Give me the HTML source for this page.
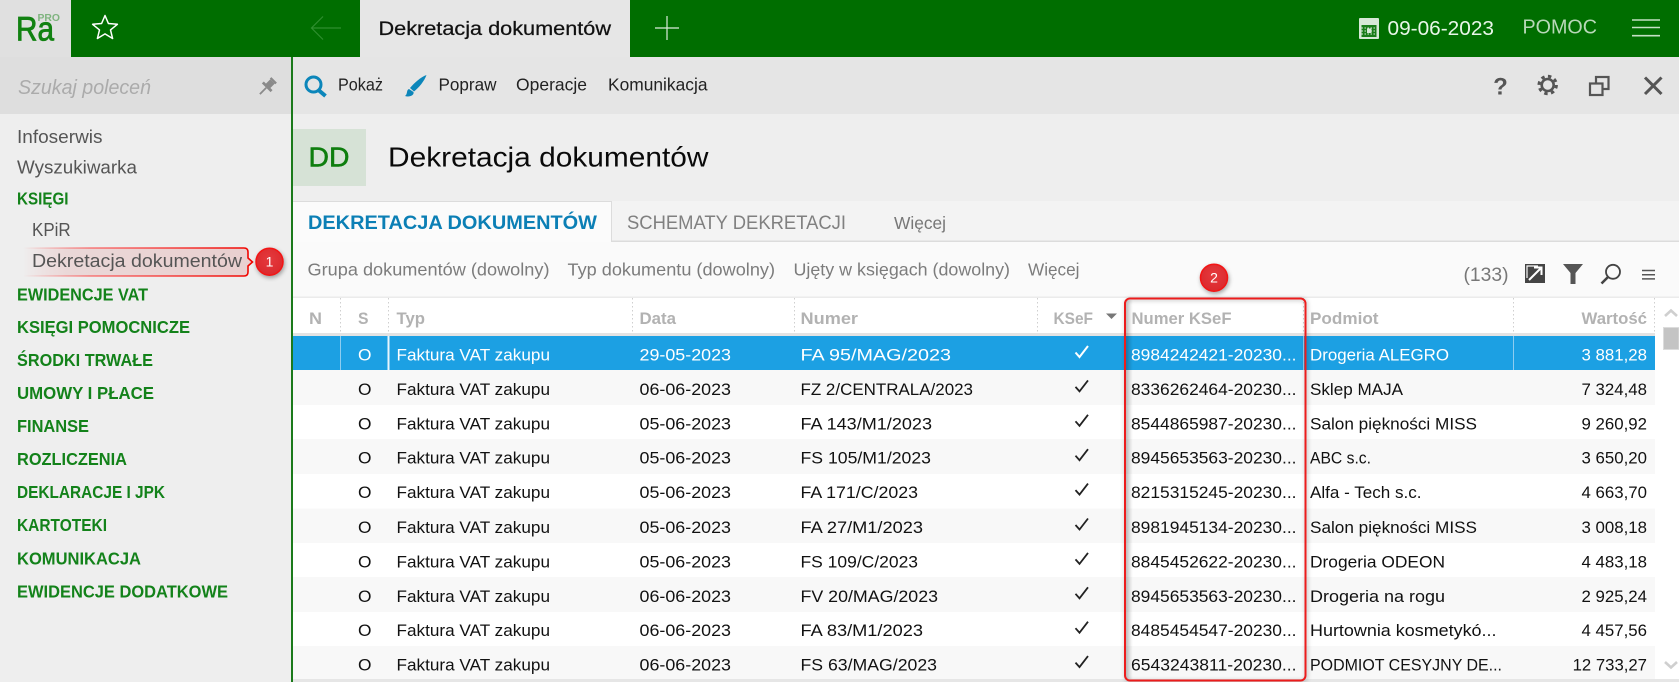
<!DOCTYPE html>
<html lang="pl">
<head>
<meta charset="utf-8">
<title>Dekretacja dokumentów</title>
<style>
html,body{margin:0;padding:0;width:1679px;height:682px;overflow:hidden;background:#fff}
svg{display:block}
text{font-family:"Liberation Sans",Arial,sans-serif;white-space:pre}
.nav{font-size:18.5px;fill:#555}
.sec{font-size:17.5px;font-weight:bold;fill:#13821a}
.tb{font-size:17.5px;fill:#222}
.flt{font-size:17.5px;fill:#7c7c7c}
.hd{font-size:17px;font-weight:bold;fill:#b2b2b2}
.r{font-size:17px;fill:#111}
.s{font-size:17px;fill:#fff}
</style>
</head>
<body>
<svg width="1679" height="682" viewBox="0 0 1679 682" xmlns="http://www.w3.org/2000/svg">
<defs>
<linearGradient id="hl" x1="23" x2="248" y1="0" y2="0" gradientUnits="userSpaceOnUse">
<stop offset="0" stop-color="#e66" stop-opacity="0"/><stop offset=".2" stop-color="#d88" stop-opacity=".22"/><stop offset="1" stop-color="#d88" stop-opacity=".3"/>
</linearGradient>
<linearGradient id="hls" x1="23" x2="248" y1="0" y2="0" gradientUnits="userSpaceOnUse">
<stop offset="0" stop-color="#f33" stop-opacity="0"/><stop offset=".3" stop-color="#f22" stop-opacity=".55"/><stop offset="1" stop-color="#f00500"/>
</linearGradient>
<linearGradient id="shl" x1="0" x2="1" y1="0" y2="0">
<stop offset="0" stop-color="#000" stop-opacity=".16"/><stop offset="1" stop-color="#000" stop-opacity="0"/>
</linearGradient>
<radialGradient id="bd" cx=".5" cy=".4" r=".7">
<stop offset="0" stop-color="#e53a3e"/><stop offset="1" stop-color="#d9262a"/>
</radialGradient>
</defs>

<!-- base areas -->
<rect x="0" y="0" width="1679" height="682" fill="#fff"/>
<rect x="0" y="0" width="71" height="57" fill="#e0e0e0"/>
<rect x="71" y="0" width="289" height="57" fill="#006e00"/>
<rect x="360" y="0" width="270" height="57" fill="#e6e6e6"/>
<rect x="630" y="0" width="1049" height="57" fill="#006e00"/>

<rect x="0" y="57" width="291" height="625" fill="#eeeeee"/>
<rect x="0" y="57" width="291" height="57" fill="#dedede"/>
<rect x="291" y="57" width="2" height="625" fill="#1b7a1b"/>
<rect x="293" y="57" width="1386" height="57" fill="#e5e5e5"/>
<rect x="293" y="114" width="1386" height="87" fill="#eeeeee"/>
<rect x="293" y="129" width="73" height="57" fill="#d6e2d6"/>
<rect x="293" y="201" width="1386" height="40" fill="#f3f3f3"/>
<rect x="293" y="201" width="318" height="41" fill="#fbfbfb"/>
<rect x="293" y="201" width="319" height="1" fill="#dcdcdc"/>
<rect x="611" y="201" width="1" height="40" fill="#dcdcdc"/>
<rect x="611" y="240.500" width="1068" height="1.500" fill="#dcdcdc"/>
<rect x="293" y="242" width="1386" height="55" fill="#fafafa"/>
<rect x="293" y="296.500" width="1386" height="1.500" fill="#ebebeb"/>
<rect x="293" y="333" width="1362" height="3" fill="#e3e3e3"/>

<!-- rows -->
<rect x="293" y="336" width="1362" height="34" fill="#1ca0e3"/>
<rect x="293" y="370" width="1362" height="35" fill="#f8f8f8"/>
<rect x="293" y="439" width="1362" height="35" fill="#f8f8f8"/>
<rect x="293" y="508.500" width="1362" height="34.500" fill="#f8f8f8"/>
<rect x="293" y="577" width="1362" height="35" fill="#f8f8f8"/>
<rect x="293" y="646" width="1362" height="33" fill="#f8f8f8"/>
<rect x="293" y="679" width="1386" height="3" fill="#e6e6e6"/>
<rect x="340" y="336" width="1" height="34" fill="#8ecdf0"/>
<rect x="387.500" y="336" width="2" height="34" fill="#e8f5fc"/>
<rect x="1303" y="336" width="1" height="34" fill="#8ecdf0"/>
<rect x="1513" y="336" width="1" height="34" fill="#8ecdf0"/>

<!-- header dotted separators -->
<g stroke="#cfcfcf" stroke-width="1" stroke-dasharray="1.500,2.500">
<line x1="340.500" y1="298" x2="340.500" y2="332"/>
<line x1="388.500" y1="298" x2="388.500" y2="332"/>
<line x1="632.500" y1="298" x2="632.500" y2="332"/>
<line x1="794.500" y1="298" x2="794.500" y2="332"/>
<line x1="1037.500" y1="298" x2="1037.500" y2="332"/>
<line x1="1303.500" y1="298" x2="1303.500" y2="332"/>
<line x1="1513.500" y1="298" x2="1513.500" y2="332"/>
<line x1="1654.500" y1="298" x2="1654.500" y2="332"/>
</g>

<!-- top bar -->
<text x="16" y="40.500" font-size="34" fill="#128212" stroke="#128212" stroke-width=".8" textLength="38" lengthAdjust="spacingAndGlyphs">Ra</text>
<text x="37.500" y="21" font-size="10.500" fill="#7fb47f" font-weight="bold" textLength="22.500" lengthAdjust="spacingAndGlyphs">PRO</text>
<polygon points="105,15.500 108.400,23.500 117.400,24.300 110.500,29.900 112.600,38.500 105,33.900 97.400,38.500 99.500,29.900 92.600,24.300 101.600,23.500" fill="none" stroke="#fff" stroke-width="1.500" stroke-linejoin="round"/>
<path d="M341 28H311.500M323 16.500L311.500 28L323 39.500" fill="none" stroke="#2f8f2f" stroke-width="1.200"/>
<text x="378.500" y="35" font-size="19" fill="#111" stroke="#111" stroke-width=".25" textLength="232.500" lengthAdjust="spacingAndGlyphs">Dekretacja dokumentów</text>
<path d="M655 28H679M667 16V40" stroke="#dcecdc" stroke-width="1.200" fill="none"/>
<rect x="1359" y="18" width="20" height="21" rx="1" fill="#d6e8d6"/>
<rect x="1361.500" y="25" width="15" height="12" fill="#187c18"/>
<g stroke="#d6e8d6" stroke-width="1" stroke-dasharray="1.500,1.500">
<line x1="1361.500" y1="28" x2="1376.500" y2="28"/><line x1="1361.500" y1="31" x2="1376.500" y2="31"/><line x1="1361.500" y1="34" x2="1376.500" y2="34"/>
</g>
<rect x="1367" y="28.500" width="4.500" height="4.500" fill="#d6e8d6"/>
<text x="1387.500" y="35" font-size="20" fill="#e8f6e8" textLength="106.500" lengthAdjust="spacingAndGlyphs">09-06-2023</text>
<text x="1522.500" y="33.500" font-size="20" fill="#b8d8b8" textLength="74.500" lengthAdjust="spacingAndGlyphs">POMOC</text>
<path d="M1632 20H1660M1632 27.500H1660M1632 35.700H1660" stroke="#c4e0c4" stroke-width="1.600" fill="none"/>

<!-- sidebar -->
<text x="18" y="94" font-size="20" font-style="italic" fill="#ababab" textLength="133" lengthAdjust="spacingAndGlyphs">Szukaj poleceń</text>
<g transform="translate(267 87) rotate(45) scale(1.12)" fill="#8a8a8a">
<rect x="-3.500" y="-9" width="7" height="2"/><rect x="-2.800" y="-7" width="5.600" height="6"/><rect x="-5.500" y="-1.500" width="11" height="2.500"/><rect x="-.8" y="1" width="1.600" height="8"/>
</g>
<text class="nav" x="17" y="143" textLength="85.500" lengthAdjust="spacingAndGlyphs">Infoserwis</text>
<text class="nav" x="17" y="173.500" textLength="120" lengthAdjust="spacingAndGlyphs">Wyszukiwarka</text>
<text class="sec" x="17" y="204.500" textLength="51.500" lengthAdjust="spacingAndGlyphs">KSIĘGI</text>
<text class="nav" x="32" y="236" textLength="38.700" lengthAdjust="spacingAndGlyphs">KPiR</text>

<path d="M23 248H244Q248 248 248 252V258L252.500 262L248 266V272Q248 276 244 276H23" fill="url(#hl)" stroke="url(#hls)" stroke-width="1.600"/>
<text class="nav" x="32" y="267" textLength="210" lengthAdjust="spacingAndGlyphs">Dekretacja dokumentów</text>
<g style="filter:drop-shadow(1px 2px 2px rgba(0,0,0,.35))">
<circle cx="269.500" cy="261.700" r="13.500" fill="url(#bd)" stroke="#f41414" stroke-width="1.500"/>
</g>
<text x="269.500" y="266.700" font-size="14" fill="#fff" text-anchor="middle">1</text>

<text class="sec" x="17" y="300.300" textLength="131" lengthAdjust="spacingAndGlyphs">EWIDENCJE VAT</text>
<text class="sec" x="17" y="333.200" textLength="173" lengthAdjust="spacingAndGlyphs">KSIĘGI POMOCNICZE</text>
<text class="sec" x="17" y="366.200" textLength="136" lengthAdjust="spacingAndGlyphs">ŚRODKI TRWAŁE</text>
<text class="sec" x="17" y="399.200" textLength="137" lengthAdjust="spacingAndGlyphs">UMOWY I PŁACE</text>
<text class="sec" x="17" y="432" textLength="72" lengthAdjust="spacingAndGlyphs">FINANSE</text>
<text class="sec" x="17" y="465.200" textLength="110" lengthAdjust="spacingAndGlyphs">ROZLICZENIA</text>
<text class="sec" x="17" y="498.200" textLength="148" lengthAdjust="spacingAndGlyphs">DEKLARACJE I JPK</text>
<text class="sec" x="17" y="531.200" textLength="90" lengthAdjust="spacingAndGlyphs">KARTOTEKI</text>
<text class="sec" x="17" y="564.500" textLength="124" lengthAdjust="spacingAndGlyphs">KOMUNIKACJA</text>
<text class="sec" x="17" y="597.500" textLength="211" lengthAdjust="spacingAndGlyphs">EWIDENCJE DODATKOWE</text>

<!-- toolbar -->
<circle cx="313.500" cy="84.500" r="7.500" fill="none" stroke="#0c86ba" stroke-width="3"/>
<path d="M319 90.500L325.500 96" stroke="#0c86ba" stroke-width="4" fill="none"/>
<text class="tb" x="338" y="90.700" textLength="45" lengthAdjust="spacingAndGlyphs">Pokaż</text>
<path d="M426.500 75C421 77 414 83 410 88L414 91.500C418.500 88 424.500 81 426.500 75Z" fill="#0c86ba"/>
<path d="M409 89C406 90 408 94 405 96C409 97.500 414.500 95.500 413.500 92Z" fill="#0c86ba"/>
<text class="tb" x="438.500" y="90.700" textLength="58" lengthAdjust="spacingAndGlyphs">Popraw</text>
<text class="tb" x="516" y="90.700" textLength="71" lengthAdjust="spacingAndGlyphs">Operacje</text>
<text class="tb" x="608" y="90.700" textLength="99.500" lengthAdjust="spacingAndGlyphs">Komunikacja</text>

<text x="1500.500" y="94.500" font-size="24" font-weight="bold" fill="#555" text-anchor="middle">?</text>
<circle cx="1547.700" cy="85" r="6" fill="none" stroke="#555" stroke-width="2.600"/>
<circle cx="1547.700" cy="85" r="8.700" fill="none" stroke="#555" stroke-width="3" stroke-dasharray="3.400,3.430"/>
<rect x="1596" y="77" width="12.500" height="12" fill="none" stroke="#555" stroke-width="2.200"/>
<rect x="1590" y="83.500" width="12.500" height="11.500" fill="#e5e5e5" stroke="#555" stroke-width="2.200"/>
<path d="M1645 77.500L1661.500 94M1661.500 77.500L1645 94" stroke="#555" stroke-width="3" fill="none"/>

<!-- page title -->
<text x="308.500" y="166.700" font-size="28" fill="#0e7e0e" stroke="#0e7e0e" stroke-width=".5" textLength="41" lengthAdjust="spacingAndGlyphs">DD</text>
<text x="388" y="166.700" font-size="28" fill="#0a0a0a" textLength="320.500" lengthAdjust="spacingAndGlyphs">Dekretacja dokumentów</text>

<!-- tabs -->
<text x="308" y="229" font-size="19" font-weight="bold" fill="#0b7fb5" textLength="289" lengthAdjust="spacingAndGlyphs">DEKRETACJA DOKUMENTÓW</text>
<text x="627" y="229" font-size="19" fill="#808080" textLength="219" lengthAdjust="spacingAndGlyphs">SCHEMATY DEKRETACJI</text>
<text x="894" y="229" font-size="17.500" fill="#777" textLength="52" lengthAdjust="spacingAndGlyphs">Więcej</text>

<!-- filters -->
<text class="flt" x="307.500" y="275.700" textLength="242" lengthAdjust="spacingAndGlyphs">Grupa dokumentów (dowolny)</text>
<text class="flt" x="567.500" y="275.700" textLength="207.500" lengthAdjust="spacingAndGlyphs">Typ dokumentu (dowolny)</text>
<text class="flt" x="793.500" y="275.700" textLength="216.500" lengthAdjust="spacingAndGlyphs">Ujęty w księgach (dowolny)</text>
<text class="flt" x="1028" y="275.700" textLength="51.500" lengthAdjust="spacingAndGlyphs">Więcej</text>
<text x="1463.500" y="281" font-size="19" fill="#777" textLength="45" lengthAdjust="spacingAndGlyphs">(133)</text>
<rect x="1525" y="264" width="20" height="19" fill="#444"/>
<path d="M1529 280L1541 268M1534 267.500H1541.500V275" fill="none" stroke="#fff" stroke-width="2"/>
<path d="M1527 278V266H1538" fill="none" stroke="#fafafa" stroke-width="1.200"/>
<polygon points="1563,264 1583,264 1575.500,273 1575.500,284 1570.500,284 1570.500,273" fill="#555"/>
<circle cx="1613" cy="271.800" r="7" fill="none" stroke="#444" stroke-width="1.800"/>
<path d="M1608 277L1601.500 283.500" stroke="#444" stroke-width="2.600" fill="none"/>
<path d="M1642 270.500H1655M1642 274.700H1655M1642 278.900H1655" stroke="#555" stroke-width="1.500" fill="none"/>

<!-- table header -->
<text class="hd" x="309" y="324" textLength="13" lengthAdjust="spacingAndGlyphs">N</text>
<text class="hd" x="358" y="324" textLength="10.500" lengthAdjust="spacingAndGlyphs">S</text>
<text class="hd" x="396.500" y="324" textLength="28.500" lengthAdjust="spacingAndGlyphs">Typ</text>
<text class="hd" x="639.500" y="324" textLength="36.500" lengthAdjust="spacingAndGlyphs">Data</text>
<text class="hd" x="800.500" y="324" textLength="57.500" lengthAdjust="spacingAndGlyphs">Numer</text>
<text class="hd" x="1053.500" y="324" textLength="39.500" lengthAdjust="spacingAndGlyphs">KSeF</text>
<polygon points="1106,313.500 1117,313.500 1111.500,319" fill="#777"/>
<text class="hd" x="1131.500" y="324" textLength="100" lengthAdjust="spacingAndGlyphs">Numer KSeF</text>
<text class="hd" x="1310" y="324" textLength="68.500" lengthAdjust="spacingAndGlyphs">Podmiot</text>
<text class="hd" x="1581.500" y="324" textLength="65.500" lengthAdjust="spacingAndGlyphs">Wartość</text>

<!-- scrollbar -->
<path d="M1665 316L1671 310.500L1677 316" fill="none" stroke="#cfcfcf" stroke-width="2.600"/>
<rect x="1663.500" y="327.500" width="15.500" height="22" fill="#c4c4c4" stroke="#dcdcdc"/>
<path d="M1665 662L1671 667.500L1677 662" fill="none" stroke="#cfcfcf" stroke-width="2.600"/>

<!-- rows text -->
<g transform="translate(0 -.5)">
<text class="s" x="358" y="361" textLength="13.500" lengthAdjust="spacingAndGlyphs">O</text>
<text class="s" x="396.500" y="361" textLength="153.500" lengthAdjust="spacingAndGlyphs">Faktura VAT zakupu</text>
<text class="s" x="639.500" y="361" textLength="91.500" lengthAdjust="spacingAndGlyphs">29-05-2023</text>
<text class="s" x="800.500" y="361" textLength="150.500" lengthAdjust="spacingAndGlyphs">FA 95/MAG/2023</text>
<path d="M1075.500 353L1079.500 357.500L1088 346.500" fill="none" stroke="#fff" stroke-width="2"/>
<text class="s" x="1131" y="361" textLength="165.500" lengthAdjust="spacingAndGlyphs">8984242421-20230...</text>
<text class="s" x="1310" y="361" textLength="139" lengthAdjust="spacingAndGlyphs">Drogeria ALEGRO</text>
<text class="s" x="1581.500" y="361" textLength="65.500" lengthAdjust="spacingAndGlyphs">3 881,28</text>
</g>
<g transform="translate(0 -.5)">
<text class="r" x="358" y="395.400" textLength="13.500" lengthAdjust="spacingAndGlyphs">O</text>
<text class="r" x="396.500" y="395.400" textLength="153.500" lengthAdjust="spacingAndGlyphs">Faktura VAT zakupu</text>
<text class="r" x="639.500" y="395.400" textLength="91.500" lengthAdjust="spacingAndGlyphs">06-06-2023</text>
<text class="r" x="800.500" y="395.400" textLength="172.500" lengthAdjust="spacingAndGlyphs">FZ 2/CENTRALA/2023</text>
<path d="M1075.500 387.400L1079.500 391.900L1088 380.900" fill="none" stroke="#222" stroke-width="1.800"/>
<text class="r" x="1131" y="395.400" textLength="165.500" lengthAdjust="spacingAndGlyphs">8336262464-20230...</text>
<text class="r" x="1310" y="395.400" textLength="93" lengthAdjust="spacingAndGlyphs">Sklep MAJA</text>
<text class="r" x="1581.500" y="395.400" textLength="65.500" lengthAdjust="spacingAndGlyphs">7 324,48</text>
</g>
<g transform="translate(0 -.5)">
<text class="r" x="358" y="429.800" textLength="13.500" lengthAdjust="spacingAndGlyphs">O</text>
<text class="r" x="396.500" y="429.800" textLength="153.500" lengthAdjust="spacingAndGlyphs">Faktura VAT zakupu</text>
<text class="r" x="639.500" y="429.800" textLength="91.500" lengthAdjust="spacingAndGlyphs">05-06-2023</text>
<text class="r" x="800.500" y="429.800" textLength="131.500" lengthAdjust="spacingAndGlyphs">FA 143/M1/2023</text>
<path d="M1075.500 421.800L1079.500 426.300L1088 415.300" fill="none" stroke="#222" stroke-width="1.800"/>
<text class="r" x="1131" y="429.800" textLength="165.500" lengthAdjust="spacingAndGlyphs">8544865987-20230...</text>
<text class="r" x="1310" y="429.800" textLength="167" lengthAdjust="spacingAndGlyphs">Salon piękności MISS</text>
<text class="r" x="1581.500" y="429.800" textLength="65.500" lengthAdjust="spacingAndGlyphs">9 260,92</text>
</g>
<g transform="translate(0 -.5)">
<text class="r" x="358" y="464.200" textLength="13.500" lengthAdjust="spacingAndGlyphs">O</text>
<text class="r" x="396.500" y="464.200" textLength="153.500" lengthAdjust="spacingAndGlyphs">Faktura VAT zakupu</text>
<text class="r" x="639.500" y="464.200" textLength="91.500" lengthAdjust="spacingAndGlyphs">05-06-2023</text>
<text class="r" x="800.500" y="464.200" textLength="130.500" lengthAdjust="spacingAndGlyphs">FS 105/M1/2023</text>
<path d="M1075.500 456.200L1079.500 460.700L1088 449.700" fill="none" stroke="#222" stroke-width="1.800"/>
<text class="r" x="1131" y="464.200" textLength="165.500" lengthAdjust="spacingAndGlyphs">8945653563-20230...</text>
<text class="r" x="1310" y="464.200" textLength="61" lengthAdjust="spacingAndGlyphs">ABC s.c.</text>
<text class="r" x="1581.500" y="464.200" textLength="65.500" lengthAdjust="spacingAndGlyphs">3 650,20</text>
</g>
<g transform="translate(0 -.5)">
<text class="r" x="358" y="498.600" textLength="13.500" lengthAdjust="spacingAndGlyphs">O</text>
<text class="r" x="396.500" y="498.600" textLength="153.500" lengthAdjust="spacingAndGlyphs">Faktura VAT zakupu</text>
<text class="r" x="639.500" y="498.600" textLength="91.500" lengthAdjust="spacingAndGlyphs">05-06-2023</text>
<text class="r" x="800.500" y="498.600" textLength="117.500" lengthAdjust="spacingAndGlyphs">FA 171/C/2023</text>
<path d="M1075.500 490.600L1079.500 495.100L1088 484.100" fill="none" stroke="#222" stroke-width="1.800"/>
<text class="r" x="1131" y="498.600" textLength="165.500" lengthAdjust="spacingAndGlyphs">8215315245-20230...</text>
<text class="r" x="1310" y="498.600" textLength="111.500" lengthAdjust="spacingAndGlyphs">Alfa - Tech s.c.</text>
<text class="r" x="1581.500" y="498.600" textLength="65.500" lengthAdjust="spacingAndGlyphs">4 663,70</text>
</g>
<g>
<text class="r" x="358" y="533" textLength="13.500" lengthAdjust="spacingAndGlyphs">O</text>
<text class="r" x="396.500" y="533" textLength="153.500" lengthAdjust="spacingAndGlyphs">Faktura VAT zakupu</text>
<text class="r" x="639.500" y="533" textLength="91.500" lengthAdjust="spacingAndGlyphs">05-06-2023</text>
<text class="r" x="800.500" y="533" textLength="122.500" lengthAdjust="spacingAndGlyphs">FA 27/M1/2023</text>
<path d="M1075.500 525L1079.500 529.500L1088 518.500" fill="none" stroke="#222" stroke-width="1.800"/>
<text class="r" x="1131" y="533" textLength="165.500" lengthAdjust="spacingAndGlyphs">8981945134-20230...</text>
<text class="r" x="1310" y="533" textLength="167" lengthAdjust="spacingAndGlyphs">Salon piękności MISS</text>
<text class="r" x="1581.500" y="533" textLength="65.500" lengthAdjust="spacingAndGlyphs">3 008,18</text>
</g>
<g>
<text class="r" x="358" y="567.400" textLength="13.500" lengthAdjust="spacingAndGlyphs">O</text>
<text class="r" x="396.500" y="567.400" textLength="153.500" lengthAdjust="spacingAndGlyphs">Faktura VAT zakupu</text>
<text class="r" x="639.500" y="567.400" textLength="91.500" lengthAdjust="spacingAndGlyphs">05-06-2023</text>
<text class="r" x="800.500" y="567.400" textLength="117.500" lengthAdjust="spacingAndGlyphs">FS 109/C/2023</text>
<path d="M1075.500 559.400L1079.500 563.900L1088 552.900" fill="none" stroke="#222" stroke-width="1.800"/>
<text class="r" x="1131" y="567.400" textLength="165.500" lengthAdjust="spacingAndGlyphs">8845452622-20230...</text>
<text class="r" x="1310" y="567.400" textLength="135" lengthAdjust="spacingAndGlyphs">Drogeria ODEON</text>
<text class="r" x="1581.500" y="567.400" textLength="65.500" lengthAdjust="spacingAndGlyphs">4 483,18</text>
</g>
<g>
<text class="r" x="358" y="601.800" textLength="13.500" lengthAdjust="spacingAndGlyphs">O</text>
<text class="r" x="396.500" y="601.800" textLength="153.500" lengthAdjust="spacingAndGlyphs">Faktura VAT zakupu</text>
<text class="r" x="639.500" y="601.800" textLength="91.500" lengthAdjust="spacingAndGlyphs">06-06-2023</text>
<text class="r" x="800.500" y="601.800" textLength="137.500" lengthAdjust="spacingAndGlyphs">FV 20/MAG/2023</text>
<path d="M1075.500 593.800L1079.500 598.300L1088 587.300" fill="none" stroke="#222" stroke-width="1.800"/>
<text class="r" x="1131" y="601.800" textLength="165.500" lengthAdjust="spacingAndGlyphs">8945653563-20230...</text>
<text class="r" x="1310" y="601.800" textLength="135" lengthAdjust="spacingAndGlyphs">Drogeria na rogu</text>
<text class="r" x="1581.500" y="601.800" textLength="65.500" lengthAdjust="spacingAndGlyphs">2 925,24</text>
</g>
<g>
<text class="r" x="358" y="636" textLength="13.500" lengthAdjust="spacingAndGlyphs">O</text>
<text class="r" x="396.500" y="636" textLength="153.500" lengthAdjust="spacingAndGlyphs">Faktura VAT zakupu</text>
<text class="r" x="639.500" y="636" textLength="91.500" lengthAdjust="spacingAndGlyphs">06-06-2023</text>
<text class="r" x="800.500" y="636" textLength="122.500" lengthAdjust="spacingAndGlyphs">FA 83/M1/2023</text>
<path d="M1075.500 628.200L1079.500 632.700L1088 621.700" fill="none" stroke="#222" stroke-width="1.800"/>
<text class="r" x="1131" y="636" textLength="165.500" lengthAdjust="spacingAndGlyphs">8485454547-20230...</text>
<text class="r" x="1310" y="636" textLength="186.500" lengthAdjust="spacingAndGlyphs">Hurtownia kosmetykó...</text>
<text class="r" x="1581.500" y="636" textLength="65.500" lengthAdjust="spacingAndGlyphs">4 457,56</text>
</g>
<g>
<text class="r" x="358" y="670.600" textLength="13.500" lengthAdjust="spacingAndGlyphs">O</text>
<text class="r" x="396.500" y="670.600" textLength="153.500" lengthAdjust="spacingAndGlyphs">Faktura VAT zakupu</text>
<text class="r" x="639.500" y="670.600" textLength="91.500" lengthAdjust="spacingAndGlyphs">06-06-2023</text>
<text class="r" x="800.500" y="670.600" textLength="136.500" lengthAdjust="spacingAndGlyphs">FS 63/MAG/2023</text>
<path d="M1075.500 662.600L1079.500 667.100L1088 656.100" fill="none" stroke="#222" stroke-width="1.800"/>
<text class="r" x="1131" y="670.600" textLength="165.500" lengthAdjust="spacingAndGlyphs">6543243811-20230...</text>
<text class="r" x="1310" y="670.600" textLength="192" lengthAdjust="spacingAndGlyphs">PODMIOT CESYJNY DE...</text>
<text class="r" x="1572.600" y="670.600" textLength="74.400" lengthAdjust="spacingAndGlyphs">12 733,27</text>
</g>

<!-- annotation 2 -->
<rect x="1126" y="300" width="7" height="379" fill="url(#shl)"/>
<rect x="1125" y="298.500" width="180.500" height="382" rx="5" fill="none" stroke="#ec1c1c" stroke-width="2" style="filter:drop-shadow(1px 1px 2px rgba(0,0,0,.3))"/>
<g style="filter:drop-shadow(1px 2px 2px rgba(0,0,0,.35))">
<circle cx="1214" cy="277.700" r="13.500" fill="url(#bd)" stroke="#f41414" stroke-width="1.500"/>
</g>
<text x="1214" y="282.700" font-size="14" fill="#fff" text-anchor="middle">2</text>
</svg>
</body>
</html>
